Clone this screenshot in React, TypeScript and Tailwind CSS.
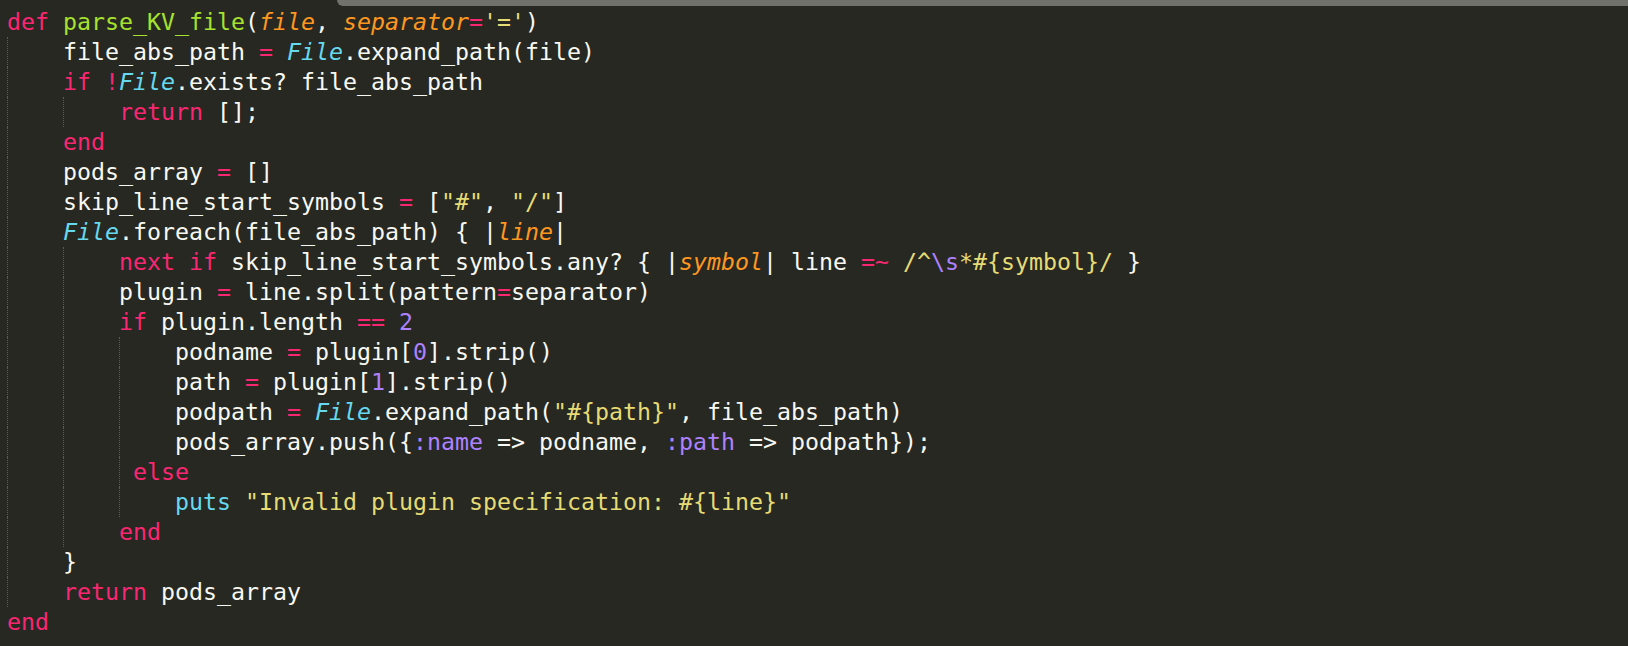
type Tok = [string, string]

const K = "text-[#f92672]"
const G = "text-[#a6e22e]"
const O = "text-[#fd971f] italic"
const Y = "text-[#e6db74]"
const C = "text-[#66d9ef] italic"
const CN = "text-[#66d9ef]"
const P = "text-[#ae81ff]"
const W = "text-[#f8f8f2]"

// [indent, tokens]
const lines: [number, Tok[]][] = [
  [0, [[K, "def"], [W, " "], [G, "parse_KV_file"], [W, "("], [O, "file"], [W, ", "], [O, "separator"], [K, "="], [Y, "'='"], [W, ")"]]],
  [4, [[W, "file_abs_path "], [K, "="], [W, " "], [C, "File"], [W, ".expand_path(file)"]]],
  [4, [[K, "if"], [W, " "], [K, "!"], [C, "File"], [W, ".exists? file_abs_path"]]],
  [8, [[K, "return"], [W, " [];"]]],
  [4, [[K, "end"]]],
  [4, [[W, "pods_array "], [K, "="], [W, " []"]]],
  [4, [[W, "skip_line_start_symbols "], [K, "="], [W, " ["], [Y, '"#"'], [W, ", "], [Y, '"/"'], [W, "]"]]],
  [4, [[C, "File"], [W, ".foreach(file_abs_path) { |"], [O, "line"], [W, "|"]]],
  [8, [[K, "next"], [W, " "], [K, "if"], [W, " skip_line_start_symbols.any? { |"], [O, "symbol"], [W, "| line "], [K, "=~"], [W, " "], [Y, "/^"], [P, "\\s"], [Y, "*#{symbol}/"], [W, " }"]]],
  [8, [[W, "plugin "], [K, "="], [W, " line.split(pattern"], [K, "="], [W, "separator)"]]],
  [8, [[K, "if"], [W, " plugin.length "], [K, "=="], [W, " "], [P, "2"]]],
  [12, [[W, "podname "], [K, "="], [W, " plugin["], [P, "0"], [W, "].strip()"]]],
  [12, [[W, "path "], [K, "="], [W, " plugin["], [P, "1"], [W, "].strip()"]]],
  [12, [[W, "podpath "], [K, "="], [W, " "], [C, "File"], [W, ".expand_path("], [Y, '"#{path}"'], [W, ", file_abs_path)"]]],
  [12, [[W, "pods_array.push({"], [P, ":name"], [W, " => podname, "], [P, ":path"], [W, " => podpath});"]]],
  [9, [[K, "else"]]],
  [12, [[CN, "puts"], [W, " "], [Y, '"Invalid plugin specification: #{line}"']]],
  [8, [[K, "end"]]],
  [4, [[W, "}"]]],
  [4, [[K, "return"], [W, " pods_array"]]],
  [0, [[K, "end"]]],
]

function Indent({ n }: { n: number }) {
  // one dotted guide per 4-column step
  const cells = []
  for (let i = 0; i < n; i += 4) {
    const w = Math.min(4, n - i)
    cells.push(
      <span
        key={i}
        className={`shrink-0 border-l border-dotted border-[#5b5c55] ${w === 4 ? "w-[56px]" : "w-[14px]"}`}
      />
    )
  }
  return <>{cells}</>
}

export default function App() {
  return (
    <div className="min-h-screen w-full bg-[#272822] font-['DejaVu_Sans_Mono',monospace]">
      <div className="flex h-[6px]">
        <div className="w-[337px]" />
        <div className="flex-1 rounded-bl-[6px] bg-[#71726c]" />
      </div>
      <div className="pl-[7px] pt-px text-[23.254px] leading-[30px]">
        {lines.map(([indent, toks], i) => (
          <div key={i} className="flex h-[30px] whitespace-pre">
            <Indent n={indent} />
            <span>
              {toks.map(([cls, text], j) => (
                <span key={j} className={cls}>{text}</span>
              ))}
            </span>
          </div>
        ))}
      </div>
    </div>
  )
}
